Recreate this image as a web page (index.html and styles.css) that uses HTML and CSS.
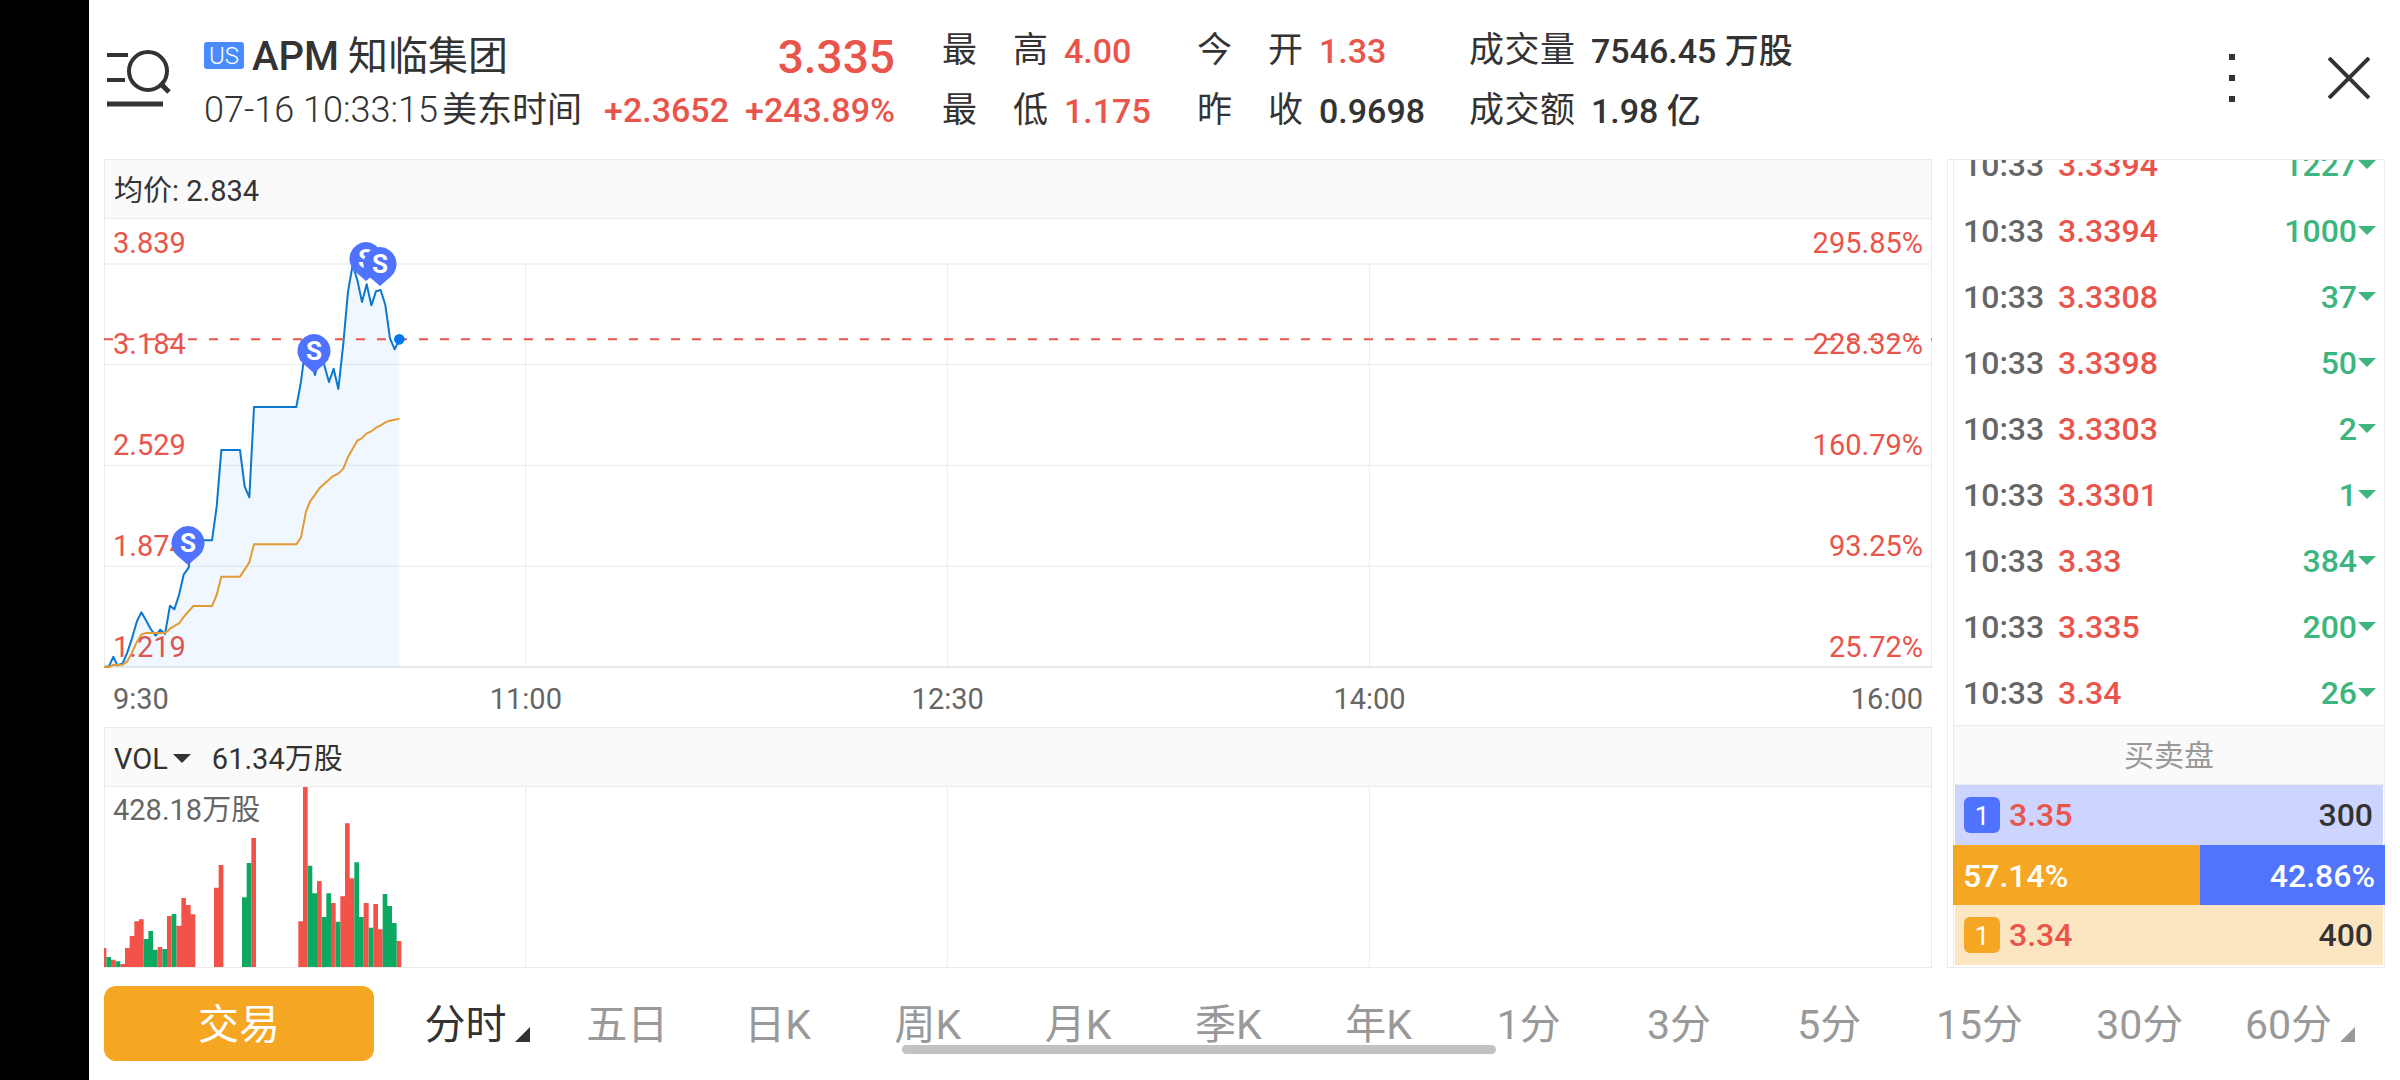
FILE: index.html
```html
<!DOCTYPE html>
<html lang="zh-CN">
<head>
<meta charset="utf-8">
<title>APM 知临集团</title>
<link rel="stylesheet" href="styles.css">
</head>
<body>
<div class="screen">
  <header class="top">
    <button class="icon-btn search" aria-label="搜索">
      <svg width="64" height="58" viewBox="0 0 64 58" fill="none" stroke="#333" stroke-width="4">
        <path d="M0 5h21M0 30h18"/>
        <path d="M0 54h56" stroke-width="5"/>
        <circle cx="41" cy="21" r="19"/>
        <path d="M53 33l9 9" stroke-width="5"/>
      </svg>
    </button>
    <section class="quote">
      <div class="quote-main">
        <span class="market">US</span>
        <h1 class="name"><span class="symbol">APM</span><span>知临集团</span></h1>
        <strong class="price">3.335</strong>
      </div>
      <div class="quote-sub">
        <span class="time">07-16 10:33:15</span>
        <span class="zone">美东时间</span>
        <span class="change">+2.3652</span>
        <span class="change">+243.89%</span>
      </div>
    </section>
    <dl class="stats">
      <div class="stat"><dt>最 高</dt><dd class="up">4.00</dd></div>
      <div class="stat"><dt>今 开</dt><dd class="up">1.33</dd></div>
      <div class="stat"><dt>成交量</dt><dd>7546.45 万股</dd></div>
      <div class="stat"><dt>最 低</dt><dd class="up">1.175</dd></div>
      <div class="stat"><dt>昨 收</dt><dd>0.9698</dd></div>
      <div class="stat"><dt>成交额</dt><dd>1.98 亿</dd></div>
    </dl>
    <div class="actions">
      <button class="icon-btn" aria-label="更多">
        <svg width="6" height="48" viewBox="0 0 6 48" fill="#333"><path d="M0 0h6v6H0zM0 21h6v6H0zM0 42h6v6H0z"/></svg>
      </button>
      <button class="icon-btn" aria-label="关闭">
        <svg width="42" height="42" viewBox="0 0 42 42" stroke="#333" stroke-width="4"><path d="M1 1l40 40M41 1L1 41"/></svg>
      </button>
    </div>
  </header>

  <main class="content">
    <section class="charts">
      <div class="bar">均价: 2.834</div>
      <div class="plot">
        <div class="axis">
          <span>3.839</span><span>295.85%</span>
          <span>3.184</span><span>228.32%</span>
          <span>2.529</span><span>160.79%</span>
          <span>1.874</span><span>93.25%</span>
          <span>1.219</span><span>25.72%</span>
        </div>
        <svg class="series" viewBox="0 0 5484 1347" preserveAspectRatio="none" fill="none">
          <path d="M0 135H5484" stroke="#f3f3f3" stroke-width="6"/>
          <path d="M0 436H5484M0 739H5484M0 1042H5484M1265 135V1344M2530 135V1344M3796 135V1344" stroke="#ebebeb" stroke-width="3"/>
          <path d="M0 1344H5484" stroke="#e8e8e8" stroke-width="6"/>
          <path fill="#0078e6" fill-opacity=".06" d="M0 1344L15 1342 28 1313 40 1339 56 1333 70 1300 84 1258 99 1206 112 1180 126 1204 140 1230 155 1250 169 1232 183 1245 198 1160 211 1171 225 1128 239 1067 254 1046 262 983 283 964 324 964 338 863 352 693 408 693 422 803 436 835 450 564 577 564 591 488 598 433 613 413 626 443 633 468 643 428 658 428 675 489 689 449 703 510 718 373 732 218 746 138 760 183 774 249 788 196 802 259 816 217 830 213 844 258 858 358 872 391 886 361V1344z"/>
          <path stroke="#0b78cf" stroke-width="6" stroke-linejoin="round" d="M0 1344L15 1342 28 1313 40 1339 56 1333 70 1300 84 1258 99 1206 112 1180 126 1204 140 1230 155 1250 169 1232 183 1245 198 1160 211 1171 225 1128 239 1067 254 1046 262 983 283 964 324 964 338 863 352 693 408 693 422 803 436 835 450 564 577 564 591 488 598 433 613 413 626 443 633 468 643 428 658 428 675 489 689 449 703 510 718 373 732 218 746 138 760 183 774 249 788 196 802 259 816 217 830 213 844 258 858 358 872 391 886 361"/>
          <path stroke="#e39a35" stroke-width="6" stroke-linejoin="round" d="M0 1344L15 1344 28 1338 56 1337 70 1327 84 1301 99 1268 112 1247 126 1242 183 1242 198 1229 225 1213 239 1194 268 1161 324 1161 338 1128 352 1073 408 1073 436 1030 450 976 577 976 591 955 606 878 618 848 648 806 686 772 703 764 718 749 732 714 746 689 760 665 773 658 788 643 802 637 816 626 830 619 844 610 858 605 886 599"/>
          <path d="M0 361H5484" stroke="#e9544b" stroke-width="6" stroke-dasharray="27 36"/>
          <circle cx="886" cy="361" r="16" fill="#0078f0"/>
        </svg>
        <ul class="markers">
          <li class="marker" style="left:13.36%;top:23px"><svg width="34" height="40" viewBox="0 0 34 40"><path d="M17 0a17 17 0 0 0-11 29.500L17 39l11-9.500A17 17 0 0 0 17 0z"/></svg><span>S</span></li>
          <li class="marker" style="left:14.13%;top:28px"><svg width="34" height="40" viewBox="0 0 34 40"><path d="M17 0a17 17 0 0 0-11 29.500L17 39l11-9.500A17 17 0 0 0 17 0z"/></svg><span>S</span></li>
          <li class="marker" style="left:10.51%;top:115px"><svg width="34" height="40" viewBox="0 0 34 40"><path d="M17 0a17 17 0 0 0-11 29.500L17 39l11-9.500A17 17 0 0 0 17 0z"/></svg><span>S</span></li>
          <li class="marker" style="left:3.61%;top:307px"><svg width="34" height="40" viewBox="0 0 34 40"><path d="M17 0a17 17 0 0 0-11 29.500L17 39l11-9.500A17 17 0 0 0 17 0z"/></svg><span>S</span></li>
        </ul>
      </div>
      <div class="times"><span>9:30</span><span>11:00</span><span>12:30</span><span>14:00</span><span>16:00</span></div>
      <div class="bar">
        <button class="indicator">VOL<i class="caret"></i></button>
        <span>61.34万股</span>
      </div>
      <div class="volume">
        <span class="volume-max">428.18万股</span>
        <svg class="series" viewBox="0 0 5484 540" preserveAspectRatio="none">
          <path d="M1265 0V540M2530 0V540M3796 0V540" stroke="#ebebeb" stroke-width="3"/>
          <path fill="#f25248" d="M0 540v-57h7V540zM21 540v-22h14V540zM49 540v-9h14V540zM63 540v-57h14V540zM77 540v-93h14V540zM91 540v-137h14V540zM105 540v-143h14V540zM161 540v-60h14V540zM189 540v-153h14V540zM217 540v-124h15V540zM232 540v-207h14V540zM246 540v-186h14V540zM260 540v-158h14V540zM330 540v-238h14V540zM344 540v-306h14V540zM442 540v-387h14V540zM583 540v-137h14V540zM597 540v-540h14V540zM639 540v-258h14V540zM681 540v-192h14V540zM709 540v-212h14V540zM723 540v-431h14V540zM737 540v-266h14V540zM779 540v-192h15V540zM808 540v-189h14V540zM822 540v-113h14V540zM878 540v-78h14V540z"/>
          <path fill="#0da862" d="M7 540v-30h14V540zM35 540v-17h14V540zM119 540v-84h14V540zM133 540v-108h14V540zM147 540v-52h14V540zM175 540v-54h14V540zM203 540v-159h14V540zM414 540v-209h14V540zM428 540v-312h14V540zM611 540v-304h14V540zM625 540v-221h14V540zM653 540v-150h14V540zM667 540v-221h14V540zM695 540v-136h14V540zM751 540v-314h14V540zM765 540v-150h14V540zM794 540v-118h14V540zM836 540v-219h14V540zM850 540v-183h14V540zM864 540v-132h14V540z"/>
        </svg>
      </div>
    </section>

    <aside class="side">
      <div class="side-inner">
        <div class="ticks">
          <table>
            <tbody>
              <tr><td>10:33</td><td class="up">3.3394</td><td>1227<i class="caret"></i></td></tr>
              <tr><td>10:33</td><td class="up">3.3394</td><td>1000<i class="caret"></i></td></tr>
              <tr><td>10:33</td><td class="up">3.3308</td><td>37<i class="caret"></i></td></tr>
              <tr><td>10:33</td><td class="up">3.3398</td><td>50<i class="caret"></i></td></tr>
              <tr><td>10:33</td><td class="up">3.3303</td><td>2<i class="caret"></i></td></tr>
              <tr><td>10:33</td><td class="up">3.3301</td><td>1<i class="caret"></i></td></tr>
              <tr><td>10:33</td><td class="up">3.33</td><td>384<i class="caret"></i></td></tr>
              <tr><td>10:33</td><td class="up">3.335</td><td>200<i class="caret"></i></td></tr>
              <tr><td>10:33</td><td class="up">3.34</td><td>26<i class="caret"></i></td></tr>
            </tbody>
          </table>
        </div>
        <h2 class="book-title">买卖盘</h2>
        <div class="level ask"><b>1</b><span class="up">3.35</span><span class="size">300</span></div>
        <div class="ratio"><span class="buy" style="width:57.14%">57.14%</span><span class="sell">42.86%</span></div>
        <div class="level bid"><b>1</b><span class="up">3.34</span><span class="size">400</span></div>
      </div>
    </aside>
  </main>

  <footer class="bottom">
    <button class="trade">交易</button>
    <nav class="periods">
      <button class="period active">分时<i class="corner"></i></button>
      <button class="period">五日</button>
      <button class="period">日K</button>
      <button class="period">周K</button>
      <button class="period">月K</button>
      <button class="period">季K</button>
      <button class="period">年K</button>
      <button class="period">1分</button>
      <button class="period">3分</button>
      <button class="period">5分</button>
      <button class="period">15分</button>
      <button class="period wide">30分</button>
      <button class="period">60分<i class="corner"></i></button>
    </nav>
  </footer>
  <div class="home-indicator"></div>
</div>
</body>
</html>
```
FILE: styles.css
```css
* { box-sizing: border-box; }

body {
  margin: 0;
  background: #fff;
  color: #333;
  font-family: Roboto, "Noto Sans CJK SC", sans-serif;
}

h1, h2, dl, dd, ul { margin: 0; padding: 0; }

button {
  margin: 0;
  padding: 0;
  border: 0;
  background: none;
  color: inherit;
  font: inherit;
}

.up { color: #e9544b; }

.screen {
  position: relative;
  display: flex;
  flex-direction: column;
  min-height: 100vh;
  border-left: 89px solid #000;
}

/* Header */
.top {
  display: flex;
  align-items: flex-start;
  height: 159px;
  padding: 21px 30px 0 18px;
}

.icon-btn { display: flex; align-items: center; }
.icon-btn.search { width: 97px; margin-top: 29px; }

.quote { width: 691px; }

.quote-main {
  display: flex;
  align-items: center;
  height: 72px;
}

.market {
  width: 40px;
  height: 27px;
  margin: 0 8px 4px 0;
  border-radius: 3px;
  background: #4a8cff;
  color: #fff;
  font-size: 24px;
  font-weight: 300;
  line-height: 28px;
  text-align: center;
}

.name {
  display: flex;
  gap: 9px;
  font-size: 40px;
  font-weight: 400;
  line-height: 60px;
}
.symbol { font-weight: 500; }

.price {
  margin-left: auto;
  color: #e9544b;
  font-size: 46px;
  font-weight: 500;
  line-height: 74px;
}

.quote-sub {
  display: flex;
  align-items: center;
  height: 35px;
  font-size: 36px;
  line-height: 35px;
  white-space: nowrap;
}

.time { font-weight: 300; }
.zone { margin: 0 auto 0 4px; font-size: 35px; }

.change {
  margin-left: 16px;
  color: #e9544b;
  font-size: 34px;
  font-weight: 500;
}

.stats {
  display: grid;
  grid-template-columns: 255px 272px auto;
  grid-auto-rows: 60px;
  margin-left: 47px;
  font-size: 35px;
  line-height: 60px;
}

.stat { display: flex; gap: 16px; white-space: nowrap; }
.stat dt { width: 106px; text-align-last: justify; }
.stat dd { font-size: 34px; font-weight: 500; }

.actions {
  display: flex;
  align-items: center;
  gap: 93px;
  height: 114px;
  margin-left: auto;
}

/* Charts */
.content {
  display: flex;
  gap: 15px;
  padding: 0 15px;
}

.charts { flex: 1; min-width: 0; }

.bar {
  display: flex;
  align-items: center;
  height: 60px;
  padding: 0 9px;
  border: 1px solid #ebebeb;
  background: #fafafa;
  font-size: 29px;
  line-height: 58px;
  padding-top: 3px;
}

.indicator { display: flex; align-items: center; gap: 5px; margin-right: 21px; }

.caret {
  display: inline-block;
  border: 9px solid transparent;
  border-top-color: currentColor;
  border-bottom: 0;
}

.plot, .volume {
  display: grid;
  position: relative;
  border: solid #ebebeb;
  border-width: 0 1px;
}
.plot > *, .volume > * { grid-area: 1 / 1; }

.axis {
  display: grid;
  grid-template-columns: 1fr 1fr;
  grid-template-rows: 45px repeat(4, 101px);
  align-items: end;
  padding: 0 8px;
  color: #e9544b;
  font-size: 29px;
  line-height: 42px;
}
.axis span:nth-child(even) { text-align: right; }

.series {
  display: block;
  width: calc(100% + 2px);
  height: 449px;
  margin: 0 -1px;
}

.markers { list-style: none; }
.marker { position: absolute; width: 34px; height: 40px; }
.marker svg { display: block; fill: #4f73ff; }
.marker span {
  position: absolute;
  inset: 0 0 6px;
  color: #fff;
  font-size: 26px;
  font-weight: 700;
  line-height: 34px;
  text-align: center;
}

.times {
  display: grid;
  grid-template-columns: 45fr 90fr 90fr 90fr 75fr;
  height: 59px;
  color: #666;
  font-size: 29px;
  line-height: 62px;
  text-align: center;
}
.times span:first-child { padding-left: 9px; text-align: left; }
.times span:last-child { padding-right: 9px; text-align: right; }

.volume { border-bottom-width: 1px; }
.volume .series { height: 180px; }
.volume-max { padding-left: 8px; color: #666; font-size: 29px; line-height: 46px; }

/* Ticks and order book */
.side {
  width: 438px;
  padding-left: 5px;
  border: 1px solid #ebebeb;
  border-right: 0;
}

.side-inner {
  display: flex;
  flex-direction: column;
  height: 100%;
  border: solid #ebebeb;
  border-width: 0 1px;
  font-size: 32px;
  font-weight: 500;
}

.ticks {
  display: flex;
  align-items: flex-end;
  height: 565px;
  overflow: hidden;
}
.ticks table { width: 100%; border-collapse: collapse; table-layout: fixed; }
.ticks tr { height: 66px; }
.ticks td { padding: 2px 0 0; }
.ticks td:first-child { width: 104px; padding-left: 9px; color: #666; }
.ticks td:last-child { padding-right: 8px; color: #3cb57e; text-align: right; }
.ticks .caret { margin-left: 1px; vertical-align: 7px; }

.book-title {
  height: 60px;
  border: solid #ebebeb;
  border-width: 1px 0;
  background: #fafafa;
  color: #999;
  font-size: 30px;
  font-weight: 400;
  line-height: 60px;
  text-align: center;
}

.level {
  display: flex;
  align-items: center;
  gap: 9px;
  height: 60px;
  margin: 0 1px;
  padding: 0 10px 0 9px;
  line-height: 62px;
}
.level b {
  width: 36px;
  height: 36px;
  border-radius: 6px;
  color: #fff;
  font-size: 26px;
  font-weight: 400;
  line-height: 38px;
  text-align: center;
}
.level .size { margin-left: auto; }
.ask { background: #cdd5ff; }
.ask b { background: #4f73ff; }
.bid { background: #fce5c1; }
.bid b { background: #f5a623; }

.ratio {
  display: flex;
  height: 60px;
  margin: 0 -1px;
  background: #5074fb;
  color: #fff;
  line-height: 62px;
}
.buy { padding-left: 10px; background: #f5a623; }
.sell { flex: 1; padding-right: 10px; text-align: right; }

/* Period tabs */
.bottom {
  display: flex;
  align-items: center;
  gap: 28px;
  padding: 18px 25px 19px 15px;
}

.trade {
  width: 270px;
  height: 75px;
  padding-top: 3px;
  border-radius: 12px;
  background: #f5a623;
  color: #fff;
  font-size: 41px;
  line-height: 72px;
}

.periods { display: flex; flex: 1; }

.period {
  display: flex;
  flex: 1 1 0;
  align-items: flex-end;
  justify-content: center;
  height: 75px;
  color: #999;
  font-size: 41px;
  line-height: 72px;
}
.period.active { color: #333; }
.period.wide { margin: 0 10px; }

.corner {
  margin: 0 0 19px 8px;
  border: solid transparent;
  border-width: 0 0 15px 15px;
  border-bottom-color: currentColor;
}

.home-indicator {
  position: absolute;
  bottom: 26px;
  left: 35.2%;
  width: 594px;
  height: 9px;
  border-radius: 5px;
  background: #c2c2c2;
}
```
